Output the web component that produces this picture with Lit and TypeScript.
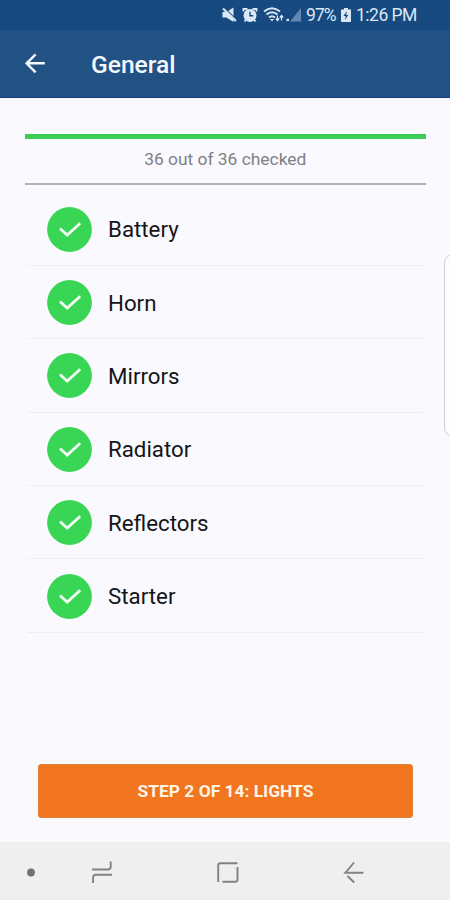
import { LitElement, html, css } from "lit";
import { customElement, property } from "lit/decorators.js";

@customElement("status-bar")
class StatusBar extends LitElement {
  static styles = css`
    :host {
      display: flex;
      align-items: center;
      height: 30px;
      box-sizing: border-box;
      padding-left: 221px;
      background: #164a80;
      color: #dbe7f5;
      font: 400 17.5px/30px Roboto, sans-serif;
    }
    .icons { flex: none; display: block; width: 81px; height: 30px; }
    .text { white-space: pre; }
    .percent { width: 31px; margin-left: 4px; letter-spacing: -0.9px; }
    .battery { flex: none; display: block; width: 10px; height: 30px; margin-left: 4px; }
    .time { margin-left: 5px; letter-spacing: -0.5px; }
  `;
  render() {
    return html`
      <svg class="icons" viewBox="221 0 81 30" fill="none" stroke="#dbe7f5">
        <path d="M222.500 12h4l7-4.500v14.500l-7-4.500h-4z" fill="#dbe7f5" stroke="none" />
        <path d="M224 7.500l13 13" stroke="#164a80" stroke-width="1.500" />
        <path d="M223 8.500l13 12.500" stroke-width="2" />
        <circle cx="250" cy="15.500" r="6.500" fill="#dbe7f5" stroke="none" />
        <path d="M243.500 11.500v-2.500h4M256.500 11.500v-2.500h-4M246 19.500l-1.500 2M254 19.500l1.500 2" stroke-width="1.900" />
        <path d="M250 11.800v4h3.200" stroke="#164a80" stroke-width="1.400" />
        <path d="M264 11.500q8-6.500 16 0M266.500 14.500q5.500-4.500 11 0M269 17.500q3-2.600 6 0" stroke-width="2" />
        <path d="M270 19h4l-2 2.500z" fill="#dbe7f5" stroke="none" />
        <path d="M277.500 15.500v5M275.800 18.500l1.700 2 1.700-2M281.500 20.500v-5M279.800 17.500l1.700-2 1.700 2" stroke-width="1.200" />
        <rect x="286.500" y="18.800" width="2.500" height="2.300" fill="#dbe7f5" stroke="none" />
        <path d="M301 8v13.500h-11z" fill="#6288b1" stroke="none" />
      </svg>
      <span class="text percent">97%</span>
      <svg class="battery" viewBox="341 0 10 30">
        <path d="M344 8h4v1.500h2.500q.5 0 .5.500v11q0 1-1 1h-8q-1 0-1-1V10q0-.5.500-.5H344z" fill="#dbe7f5" />
        <path d="M346.800 11l-3.300 5h2.200l-.8 4 3.500-5h-2.200z" fill="#164a80" />
      </svg>
      <span class="text time">1:26 PM</span>
    `;
  }
}

@customElement("title-bar")
class TitleBar extends LitElement {
  static styles = css`
    :host {
      display: flex;
      align-items: center;
      height: 67.5px;
      box-sizing: border-box;
      padding-left: 24px;
      border-bottom: 1px solid #123f74;
      background: #225284;
      color: #f4f8ff;
      font: 500 24.6px/62px Roboto, sans-serif;
    }
    .back { flex: none; display: block; width: 22px; height: 22px; margin-right: 45px; }
    .title { padding-top: 4px; }
  `;
  render() {
    return html`
      <svg class="back" viewBox="0 0 22 22" fill="none" stroke="#f4f8ff" stroke-width="2.400">
        <path d="M20.800 11.300H3M11.600 2.300L2.600 11.300l9 9" />
      </svg>
      <span class="title">General</span>
    `;
  }
}

@customElement("check-item")
class CheckItem extends LitElement {
  @property() label = "";
  static styles = css`
    :host {
      display: flex;
      align-items: center;
      gap: 16px;
      height: 73.4px;
      box-sizing: border-box;
      padding: 1px 0 0 19px;
      border-bottom: 1px solid #eeeef3;
      color: #151517;
      font: 400 22.3px/30px Roboto, sans-serif;
    }
    .mark { flex: none; display: block; width: 45px; height: 45px; }
  `;
  render() {
    return html`
      <svg class="mark" viewBox="0 0 45 45">
        <circle cx="22.500" cy="22.500" r="22.400" fill="#39d655" />
        <path d="M13 21.600l7.200 6.500L33.200 16.200" fill="none" stroke="#f5fff5" stroke-width="2.700" />
      </svg>
      <span>${this.label}</span>
    `;
  }
}

@customElement("nav-bar")
class NavBar extends LitElement {
  static styles = css`
    :host { display: block; height: 58px; background: #efefef; }
    .keys { display: block; width: 100%; height: 58px; }
  `;
  render() {
    return html`
      <svg class="keys" viewBox="0 842 450 58" fill="none" stroke="#838383" stroke-width="1.900">
        <circle cx="31" cy="872.500" r="3.900" fill="#727272" stroke="none" />
        <path d="M92 869.500h16q2.700 0 2.700-2.700V861.500M112 874.700H95.800q-2.700 0-2.700 2.700V883" />
        <path d="M218.200 882v-16.500q0-2.200 2.200-2.200H237.500M237.500 867v12.500q0 2.300-2.300 2.300H222.500" />
        <path d="M363.500 872.800H345.300L354 862.500M347.500 876l6.700 6.500" />
      </svg>
    `;
  }
}

@customElement("app-root")
class AppRoot extends LitElement {
  private items = ["Battery", "Horn", "Mirrors", "Radiator", "Reflectors", "Starter"];
  private checked = 36;
  private total = 36;
  static styles = css`
    :host {
      position: relative;
      display: flex;
      flex-direction: column;
      height: 900px;
      overflow: hidden;
      background: #f9f9fe;
      font-family: Roboto, sans-serif;
    }
    .content { flex: 1; display: flex; flex-direction: column; padding: 36.500px 24.500px 24px 25px; }
    .track { height: 5px; background: #e2e2e8; }
    .fill { height: 5px; background: #3ccd59; }
    .count {
      height: 46px;
      box-sizing: border-box;
      border-bottom: 2px solid #b2b1b8;
      margin-bottom: 7.500px;
      color: #808086;
      font-size: 17.4px;
      line-height: 40px;
      text-align: center;
    }
    .list { padding: 0 3px; }
    .next {
      margin: auto 12.500px 0 13px;
      height: 54px;
      border: 1px solid #e3813a;
      box-sizing: border-box;
      border-radius: 3px;
      background: #f2751f;
      color: #fff4e6;
      font: 700 17.4px/50px Roboto, sans-serif;
      padding: 0;
      text-align: center;
      text-transform: uppercase;
      cursor: pointer;
    }
    .edge {
      position: absolute;
      left: 444px;
      top: 254px;
      width: 20px;
      height: 183px;
      box-sizing: border-box;
      border: 1.500px solid #cfcfd1;
      border-radius: 9px;
      background: #fdfdff;
    }
  `;
  render() {
    return html`
      <status-bar></status-bar>
      <title-bar></title-bar>
      <main class="content">
        <div class="track"><div class="fill" style="width:${(this.checked / this.total) * 100}%"></div></div>
        <div class="count">${this.checked} out of ${this.total} checked</div>
        <div class="list">${this.items.map((i) => html`<check-item .label=${i}></check-item>`)}</div>
        <button class="next">Step 2 of 14: Lights</button>
      </main>
      <nav-bar></nav-bar>
      <div class="edge"></div>
    `;
  }
}
